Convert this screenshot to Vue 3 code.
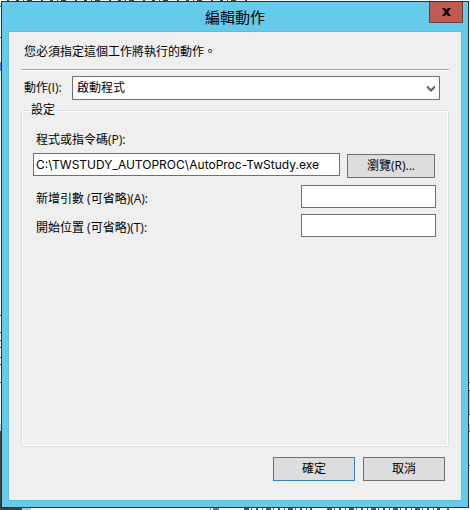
<script setup>
import { ref } from 'vue'

const action = ref('start')
const program = ref('C:\\TWSTUDY_AUTOPROC\\AutoProc-TwStudy.exe')
const args = ref('')
const startIn = ref('')
</script>

<template>
  <div class="desktop">
    <!-- edges of the window behind the dialog -->
    <svg class="behind" viewBox="0 0 470 510" preserveAspectRatio="none" aria-hidden="true">
      <path d="M7 .5H250" stroke="#444" stroke-dasharray="2 7 3 4 1 3 5 9" />
      <path d="M0 6.5H1M0 37.5H1M0 315.5H1M0 332.5H1M0 340.5H1M0 347.5H1M0 357.5H1M0 364.5H1M0 382.5H1" stroke="#555" />
      <path d="M.5 62V71" stroke="#6a86b4" />
      <path d="M0 424H1V431H0Z" fill="#c3d3d8" />
      <path d="M0 431H1V508H22V510H0Z" fill="#404040" />
      <path d="M22 508H31V510H22Z" fill="#b4c4ca" />
      <path d="M210 509H221" stroke="#777" stroke-width="2" stroke-dasharray="1 2 6 9" />
      <path d="M244 509H312M327 509H440M447 509H449" stroke="#555" stroke-width="2" stroke-dasharray="5 2 1 4 2 4 1 3" />
      <path d="M469 382.5H470M469 390.5H470M469 414.5H470M469 431.5H470M469 465.5H470" stroke="#555" />
      <path d="M469.5 391V414M469.5 424V431" stroke="#c8cfd2" />
    </svg>
    <main class="dialog" role="dialog" aria-labelledby="title">
      <header class="titlebar">
        <h1 id="title">編輯動作</h1>
        <button class="close" type="button" aria-label="關閉">
          <svg width="9" height="8" viewBox="0 0 9 8" aria-hidden="true">
            <path d="M0 0H3L4.5 2L6 0H9L6 4L9 8H6L4.5 6L3 8H0L3 4Z" fill="#000" />
          </svg>
        </button>
      </header>
      <form class="client" @submit.prevent>
        <p class="intro">您必須指定這個工作將執行的動作。</p>
        <hr class="rule" />
        <div class="action-row">
          <label for="action">動作(I):</label>
          <div class="combo">
            <select id="action" v-model="action">
              <option value="start">啟動程式</option>
            </select>
            <svg class="arrow" width="8" height="6" viewBox="0 0 8 6" aria-hidden="true">
              <path d="M0 0H1L4 3L7 0H8V2L4 6L0 2Z" fill="#606060" />
            </svg>
          </div>
        </div>
        <fieldset class="settings">
          <legend>設定</legend>
          <label class="program-label" for="program">程式或指令碼(P):</label>
          <div class="program-row">
            <input id="program" v-model="program" type="text" />
            <button class="btn" type="button">瀏覽(R)...</button>
          </div>
          <div class="field-row">
            <label for="args">新增引數 (可省略)(A):</label>
            <input id="args" v-model="args" type="text" />
          </div>
          <div class="field-row">
            <label for="start-in">開始位置 (可省略)(T):</label>
            <input id="start-in" v-model="startIn" type="text" />
          </div>
        </fieldset>
        <footer class="actions">
          <button class="btn primary" type="submit">確定</button>
          <button class="btn" type="button">取消</button>
        </footer>
      </form>
    </main>
  </div>
</template>

<style>
body {
  background: #fff;
}
</style>

<style scoped>
* {
  box-sizing: border-box;
}
.desktop {
  position: relative;
  min-height: 100vh;
  padding: 1px 1px 2px;
  display: flex;
  font: 12px/16px "Open Sans", "Noto Sans CJK TC", sans-serif;
  color: #000;
}
.behind {
  position: absolute;
  inset: 0;
  width: 100%;
  height: 100%;
}
.dialog {
  position: relative;
  flex: 1;
  display: flex;
  flex-direction: column;
  padding: 0 7px 7px;
  background: #66caea;
  border: 1px solid #26323c;
}
.titlebar {
  position: relative;
  height: 30px;
  display: flex;
  align-items: center;
  justify-content: center;
}
h1 {
  margin: 0;
  font-size: 15px;
  line-height: 20px;
  font-weight: 400;
}
.close {
  position: absolute;
  top: 0;
  right: -2px;
  width: 34px;
  height: 21px;
  padding: 0;
  display: flex;
  align-items: center;
  justify-content: center;
  background: #c25a50;
  border: 1px solid #6a3c3c;
  border-top: 0;
}
.client {
  flex: 1;
  display: flex;
  flex-direction: column;
  padding: 12px 12px 19px;
  background: #efefef;
  box-shadow: 0 0 0 1px #62bcd9;
}
.intro {
  margin: 0 3px;
}
.rule {
  width: 100%;
  height: 2px;
  margin: 9px 0 5px;
  border: 0;
  border-top: 1px solid #a0a0a0;
  background: #fff;
}
.action-row {
  display: flex;
  align-items: center;
  gap: 8px;
  padding: 0 9px 0 3px;
}
.action-row label {
  width: 40px;
  white-space: nowrap;
}
.combo {
  position: relative;
  flex: 1;
}
select {
  appearance: none;
  display: block;
  width: 100%;
  height: 24px;
  padding: 0 20px 0 4px;
  border: 1px solid #707070;
  border-radius: 0;
  background: #fff;
  font: inherit;
  color: inherit;
}
.arrow {
  position: absolute;
  right: 5px;
  top: 10px;
  pointer-events: none;
}
.settings {
  flex: 1;
  min-width: 0;
  margin: 2px 0 0;
  padding: 14px 12px 0 11px;
  border: 1px solid #d5dfe5;
  border-radius: 2px;
  box-shadow: inset 0 0 0 1px #fff;
}
legend {
  margin-left: -4px;
  padding: 0 2px;
}
.program-label {
  display: block;
  margin: 0 3px 5px;
}
input {
  height: 23px;
  min-width: 0;
  padding: 0 2px;
  border: 1px solid #707070;
  background: #fff;
  font: inherit;
  color: inherit;
}
.program-row {
  display: flex;
  align-items: flex-start;
  gap: 7px;
  margin-bottom: 7px;
  padding-right: 1px;
}
.program-row input {
  flex: 1;
  font-family: Inter, "Noto Sans CJK TC", sans-serif;
}
.program-row .btn {
  width: 88px;
  margin-top: 1px;
}
.field-row {
  display: flex;
  align-items: flex-end;
  justify-content: space-between;
  margin: 0 0 6px 3px;
}
.field-row label {
  line-height: 18px;
}
.field-row input {
  width: 135px;
}
.btn {
  width: 82px;
  height: 24px;
  padding: 0;
  border: 1px solid #707070;
  background: #ddd;
  font: inherit;
  color: inherit;
}
.actions {
  display: flex;
  justify-content: flex-end;
  gap: 8px;
  padding: 10px 4px 0 0;
}
.primary {
  border-color: #3c7fb1;
}
</style>
